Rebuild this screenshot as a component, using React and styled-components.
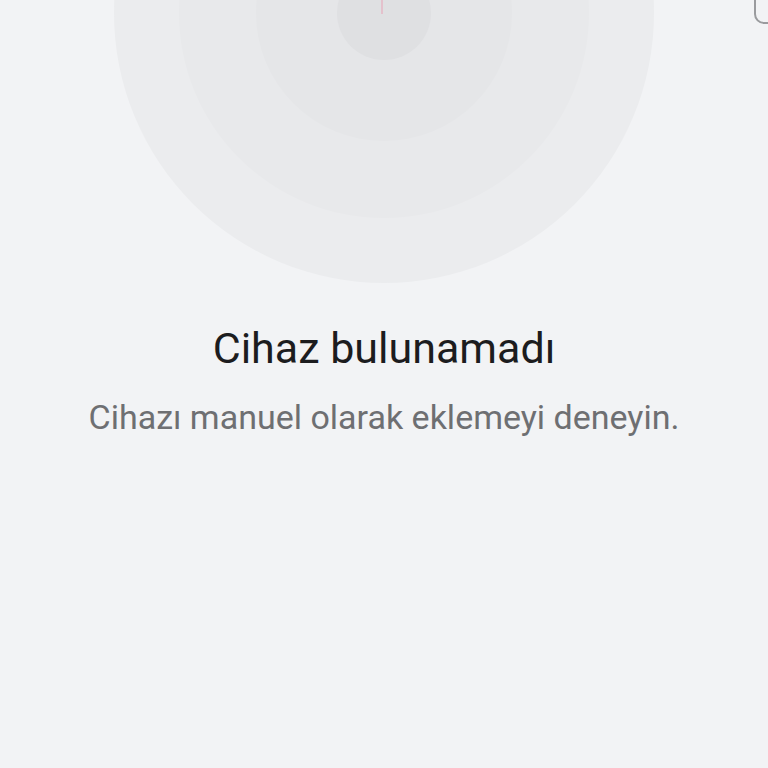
import React from "react";
import styled, { createGlobalStyle } from "styled-components";

const GlobalStyle = createGlobalStyle`
  html, body {
    margin: 0;
    padding: 0;
    background: #f2f3f5;
  }
  body {
    font-family: Roboto, "Noto Sans", sans-serif;
  }
`;

const Screen = styled.div`
  position: relative;
  width: 768px;
  height: 768px;
  overflow: hidden;
  background: #f2f3f5;
  display: flex;
  flex-direction: column;
  align-items: center;
`;

const Radar = styled.div`
  position: relative;
  width: 540px;
  height: 540px;
  margin-top: -257px;
  flex-shrink: 0;
`;

const Ring = styled.div`
  position: absolute;
  left: 50%;
  top: 50%;
  width: ${p => p.size}px;
  height: ${p => p.size}px;
  margin-left: ${p => -p.size / 2}px;
  margin-top: ${p => -p.size / 2}px;
  border-radius: 50%;
  background: ${p => p.color};
`;

const Needle = styled.div`
  position: absolute;
  left: 50%;
  top: 257px;
  width: 2px;
  height: 14px;
  margin-left: -3px;
  background: rgba(230, 180, 195, 0.7);
`;

const Title = styled.h1`
  margin: 39px 0 0;
  font-size: 43px;
  font-weight: 400;
  color: #1c1c1e;
  line-height: 52px;
  white-space: nowrap;
`;

const Subtitle = styled.p`
  margin: 22px 0 0;
  font-size: 34px;
  font-weight: 400;
  color: #6e6f72;
  line-height: 42px;
  white-space: nowrap;
`;

const CornerTab = styled.div`
  position: absolute;
  right: -20px;
  top: -20px;
  width: 30px;
  height: 40px;
  border: 2px solid #9a9b9e;
  border-radius: 10px;
`;

export default function App() {
  return (
    <>
      <GlobalStyle />
      <Screen>
        <Radar>
          <Ring size={540} color="#ebecee" />
          <Ring size={410} color="#e8e9eb" />
          <Ring size={256} color="#e5e6e8" />
          <Ring size={94} color="#dfe0e2" />
          <Needle />
        </Radar>
        <Title>Cihaz bulunamadı</Title>
        <Subtitle>Cihazı manuel olarak eklemeyi deneyin.</Subtitle>
        <CornerTab />
      </Screen>
    </>
  );
}
